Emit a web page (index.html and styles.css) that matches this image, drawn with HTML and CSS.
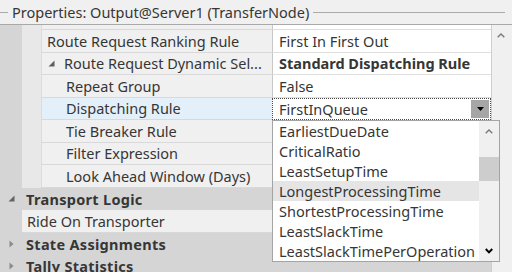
FILE: index.html
```html
<!DOCTYPE html>
<html>
<head>
<meta charset="utf-8">
<title>Properties</title>
<link rel="stylesheet" href="styles.css">
</head>
<body>
<div class="panel">
  <div class="title">
    <span class="title-line short"></span>
    <span class="title-text">Properties: Output@Server1 (TransferNode)</span>
    <span class="title-line long"></span>
  </div>
  <div class="body">
    <div class="viewport">
      <div class="rows">
        <div class="row">
          <div class="g0"></div><div class="g1"></div>
          <div class="name"></div><div class="value"></div>
        </div>
        <div class="row">
          <div class="g0"></div><div class="g1"></div>
          <div class="name">Route Request Ranking Rule</div><div class="value">First In First Out</div>
        </div>
        <div class="row">
          <div class="g0"></div><div class="g1"></div>
          <div class="name parent">
            <svg class="exp" width="7" height="7" viewBox="0 0 7 7"><path d="M6.5 0.5 V6.5 H0.5 Z" fill="#5e5e5e"/></svg>
            <span>Route Request Dynamic Sel...</span>
          </div>
          <div class="value bold">Standard Dispatching Rule</div>
        </div>
        <div class="row">
          <div class="g0"></div><div class="g1"></div>
          <div class="name child">Repeat Group</div><div class="value">False</div>
        </div>
        <div class="row">
          <div class="g0"></div><div class="g1"></div>
          <div class="name child selected">Dispatching Rule</div>
          <div class="value combo-cell">
            <div class="combo">
              <span class="combo-text">FirstInQueue</span>
              <span class="combo-btn"><svg width="7" height="4" viewBox="0 0 7 4"><path d="M0 0 H7 L3.5 4 Z" fill="#000"/></svg></span>
            </div>
          </div>
        </div>
        <div class="row">
          <div class="g0"></div><div class="g1"></div>
          <div class="name child">Tie Breaker Rule</div><div class="value"></div>
        </div>
        <div class="row">
          <div class="g0"></div><div class="g1"></div>
          <div class="name child">Filter Expression</div><div class="value"></div>
        </div>
        <div class="row">
          <div class="g0"></div><div class="g1"></div>
          <div class="name child">Look Ahead Window (Days)</div><div class="value"></div>
        </div>
        <div class="row cat">
          <span class="twisty"><svg width="7" height="7" viewBox="0 0 7 7"><path d="M6.5 0.5 V6.5 H0.5 Z" fill="#646464"/></svg></span>
          <span class="cat-text">Transport Logic</span>
        </div>
        <div class="row">
          <div class="g0"></div>
          <div class="name wide">Ride On Transporter</div><div class="value"></div>
        </div>
        <div class="row cat">
          <span class="twisty"><svg width="5" height="8" viewBox="0 0 5 8"><path d="M0.5 0.5 L4.5 4 L0.5 7.5 Z" fill="#8a8a8a"/></svg></span>
          <span class="cat-text">State Assignments</span>
        </div>
        <div class="row cat">
          <span class="twisty"><svg width="5" height="8" viewBox="0 0 5 8"><path d="M0.5 0.5 L4.5 4 L0.5 7.5 Z" fill="#8a8a8a"/></svg></span>
          <span class="cat-text">Tally Statistics</span>
        </div>
      </div>
    </div>
    <div class="vscroll">
      <svg width="8" height="5" viewBox="0 0 8 5"><path d="M0.7 4.3 L4 1 L7.3 4.3" fill="none" stroke="#7a7a7a" stroke-width="1.4"/></svg>
    </div>
  </div>

  <div class="dropdown">
    <div class="items">
      <div class="item">EarliestDueDate</div>
      <div class="item">CriticalRatio</div>
      <div class="item">LeastSetupTime</div>
      <div class="item hot">LongestProcessingTime</div>
      <div class="item">ShortestProcessingTime</div>
      <div class="item">LeastSlackTime</div>
      <div class="item">LeastSlackTimePerOperation</div>
    </div>
    <div class="lscroll">
      <div class="larrow"><svg width="8" height="5" viewBox="0 0 8 5"><path d="M0.7 4.3 L4 1 L7.3 4.3" fill="none" stroke="#7a7a7a" stroke-width="1.4"/></svg></div>
      <div class="thumb"></div>
      <div class="spacer"></div>
      <div class="larrow"><svg width="8" height="6" viewBox="0 0 8 6"><path d="M0.8 1 L4 4.4 L7.2 1" fill="none" stroke="#000" stroke-width="2"/></svg></div>
    </div>
  </div>
</div>
</body>
</html>
```

FILE: styles.css
```css
* { box-sizing: border-box; }

html, body {
  margin: 0;
  padding: 0;
}

body {
  width: 512px;
  height: 272px;
  overflow: hidden;
  background: #f0f0f0;
  font-family: "Noto Sans", "Open Sans", sans-serif;
  font-size: 14.5px;
  color: #363636;
}

.panel {
  position: relative;
  width: 512px;
  height: 272px;
  display: flex;
  flex-direction: column;
}

.title {
  flex: none;
  height: 25px;
  display: flex;
  align-items: center;
  border-bottom: 1px solid #a9a9a9;
}

.title-line {
  height: 1px;
  background: #ababab;
}

.title-line.short { width: 8px; flex: none; }
.title-line.long { flex: 1; margin-right: 7px; }

.title-text {
  margin: 0 4px;
  white-space: nowrap;
}

.body {
  flex: 1;
  display: flex;
  overflow: hidden;
}

.viewport {
  width: 491px;
  flex: none;
  overflow: hidden;
}

.rows {
  margin-top: -17.5px;
}

.row {
  display: flex;
  height: 22.5px;
  white-space: nowrap;
}

.g0 {
  width: 22px;
  flex: none;
  background: #d5d5d5;
}

.g1 {
  width: 19px;
  flex: none;
  background: #e8e8e8;
}

.name {
  width: 231px;
  flex: none;
  background: #f0f0f0;
  border-left: 1px solid #dcdcdc;
  border-bottom: 1px solid #d9d9d9;
  padding-left: 5px;
  display: flex;
  align-items: center;
  overflow: hidden;
}

.name.child { padding-left: 24px; }
.name.parent { padding-left: 6px; }
.name.parent .exp { margin-right: 9px; flex: none; }
.name.selected { background: #e3f0fa; }

.name.wide {
  width: 250px;
  border-left: none;
}

.value {
  width: 219px;
  flex: none;
  background: #fff;
  border-left: 1px solid #c8c8c8;
  border-bottom: 1px solid #dedede;
  padding-left: 6px;
  display: flex;
  align-items: center;
  overflow: hidden;
}

.value.bold { font-weight: bold; }

.value.combo-cell {
  padding: 0;
  border-bottom: none;
  border-left: none;
}

.combo {
  flex: 1;
  height: 100%;
  border: 1px dotted #4a4a4a;
  display: flex;
  align-items: center;
}

.combo-text {
  flex: 1;
  padding-left: 6px;
}

.combo-btn {
  width: 18px;
  align-self: stretch;
  margin: 1px;
  background: #a6a6a6;
  display: flex;
  align-items: center;
  justify-content: center;
}

.cat {
  background: #d5d5d5;
  align-items: center;
  font-weight: bold;
}

.twisty {
  width: 22px;
  flex: none;
  display: flex;
  justify-content: center;
  align-items: center;
}

.cat-text {
  padding-left: 4px;
  letter-spacing: 0.3px;
}

.vscroll {
  flex: 1;
  background: #f0f0f0;
  border-left: 1px solid #cfcfcf;
  display: flex;
  justify-content: center;
  align-items: flex-start;
  padding-top: 8px;
  padding-right: 2px;
}

.dropdown {
  position: absolute;
  left: 272px;
  top: 120px;
  width: 228px;
  height: 142px;
  border: 1px solid #a4a4a4;
  background: #fff;
  display: flex;
}

.items {
  width: 206px;
  flex: none;
}

.item {
  height: 20px;
  padding-left: 6px;
  display: flex;
  align-items: center;
  white-space: nowrap;
}

.item.hot { background: #e5e5e5; }

.lscroll {
  flex: 1;
  background: #f0f0f0;
  display: flex;
  flex-direction: column;
}

.larrow {
  height: 20px;
  flex: none;
  display: flex;
  align-items: center;
  justify-content: center;
}

.thumb {
  margin-top: 16px;
  height: 24px;
  flex: none;
  background: #cdcdcd;
}

.spacer { flex: 1; }
```
